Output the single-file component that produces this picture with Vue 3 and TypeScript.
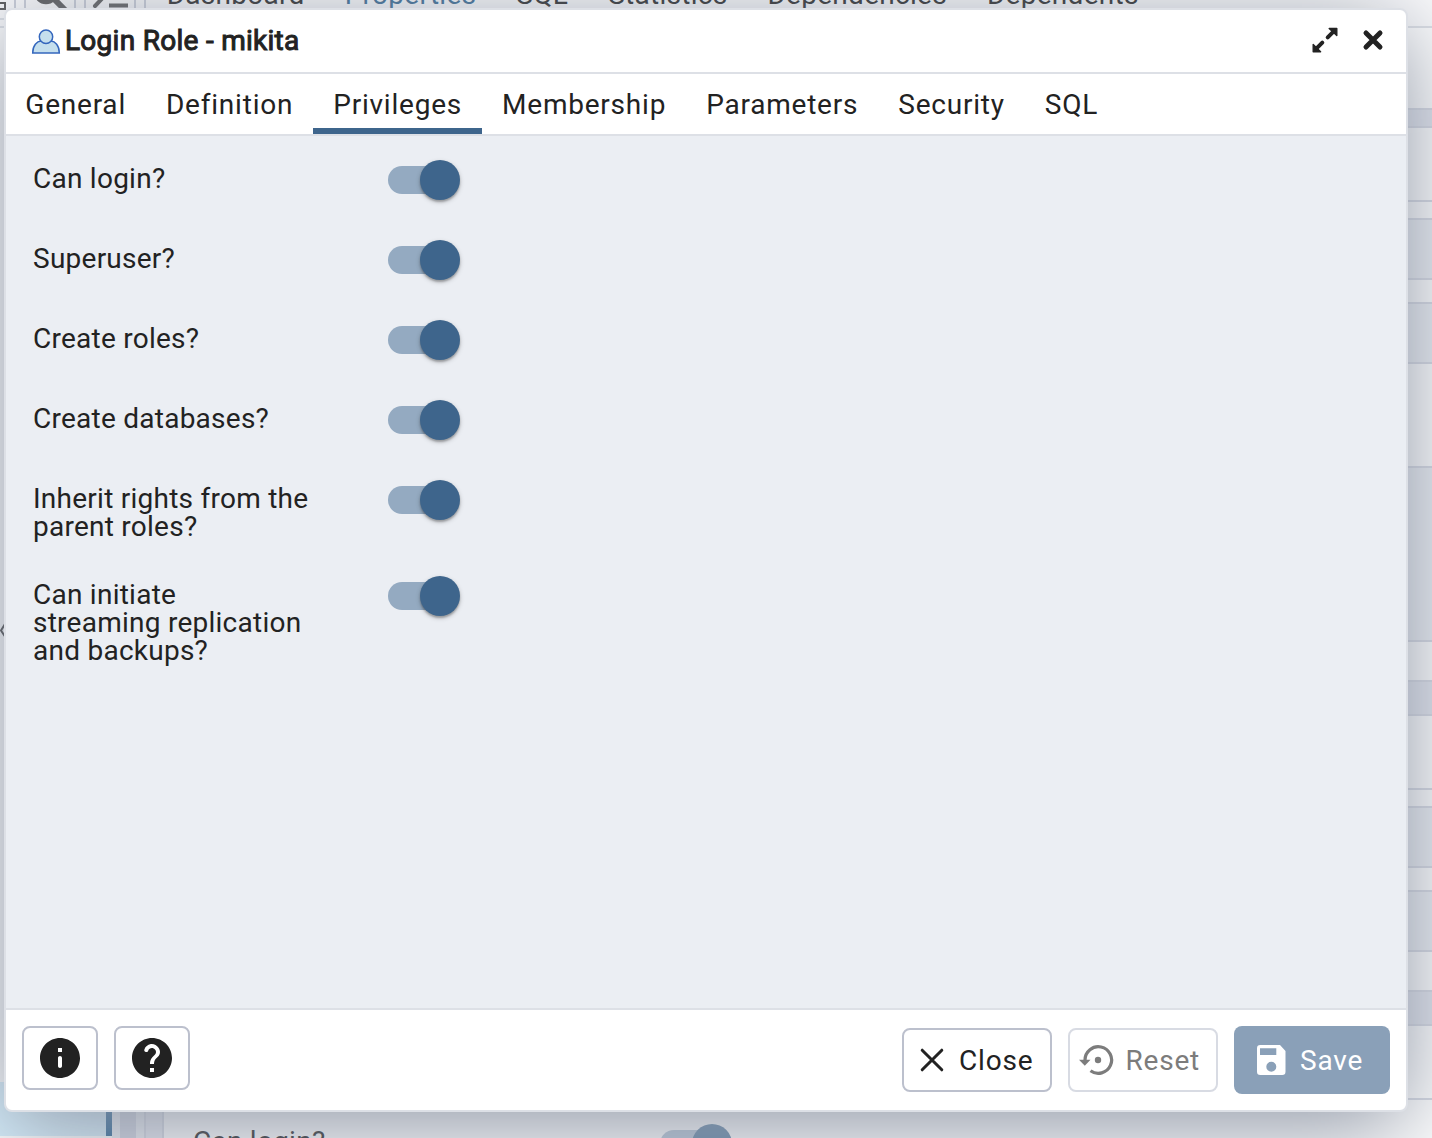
<script setup lang="ts">
import { ref } from 'vue'

interface Privilege {
  label: string
  enabled: boolean
}

interface Band {
  height: number
  tone: 'light' | 'tint' | 'head'
}

const tabs = ['General', 'Definition', 'Privileges', 'Membership', 'Parameters', 'Security', 'SQL']
const activeTab = ref('Privileges')

const privileges = ref<Privilege[]>([
  { label: 'Can login?', enabled: true },
  { label: 'Superuser?', enabled: true },
  { label: 'Create roles?', enabled: true },
  { label: 'Create databases?', enabled: true },
  { label: 'Inherit rights from the parent roles?', enabled: true },
  { label: 'Can initiate streaming replication and backups?', enabled: true },
])

const pageTabs = ['Dashboard', 'Properties', 'SQL', 'Statistics', 'Dependencies', 'Dependents']

// Heights include the 2px rule under every band.
const bands: Band[] = [
  { height: 82, tone: 'light' },
  { height: 18, tone: 'head' },
  { height: 74, tone: 'light' },
  { height: 18, tone: 'light' },
  { height: 60, tone: 'tint' },
  { height: 24, tone: 'light' },
  { height: 60, tone: 'tint' },
  { height: 104, tone: 'light' },
  { height: 174, tone: 'tint' },
  { height: 40, tone: 'light' },
  { height: 34, tone: 'head' },
  { height: 74, tone: 'light' },
  { height: 18, tone: 'light' },
  { height: 60, tone: 'tint' },
  { height: 24, tone: 'light' },
  { height: 60, tone: 'tint' },
  { height: 40, tone: 'light' },
  { height: 34, tone: 'head' },
  { height: 74, tone: 'light' },
]
</script>

<template>
  <div class="screen">
    <div class="page">
      <header class="page-bar">
        <div class="tools">
          <span class="tool tool-grid">
            <svg width="8" height="12" viewBox="0 0 8 12"><path d="M0 3h5v6H0" fill="none" stroke="#555" stroke-width="2" /></svg>
          </span>
          <span class="tool tool-search">
            <svg width="48" height="40" viewBox="0 0 48 40"><circle cx="20" cy="16" r="10" fill="none" stroke="#555" stroke-width="4.500" /><path d="M28 23l11 11" stroke="#555" stroke-width="6" /></svg>
          </span>
          <span class="tool tool-query">
            <svg width="48" height="40" viewBox="0 0 48 40"><path d="M9 9l10 10.500L9 30" fill="none" stroke="#555" stroke-width="4" stroke-linecap="round" /><path d="M23 29.500h19" stroke="#555" stroke-width="4" /></svg>
          </span>
        </div>
        <nav class="page-tabs">
          <span v-for="t in pageTabs" :key="t" :class="{ current: t === 'Properties' }">{{ t }}</span>
        </nav>
      </header>
      <div class="page-body">
        <div v-for="(b, i) in bands" :key="i" class="band" :class="b.tone" :style="{ height: b.height + 'px' }"></div>
      </div>
      <footer class="page-foot">
        <div class="tree-row"></div>
        <div class="tree-scroll"></div>
        <div class="splitter"></div>
        <div class="foot-form">
          <span class="foot-label">Can login?</span>
          <span class="switch muted"><i class="track"></i><i class="thumb"></i></span>
        </div>
      </footer>
      <svg class="collapse" width="8" height="20" viewBox="0 0 8 20"><path d="M5 4L1 10.500l4 6" fill="none" stroke="#333" stroke-width="2" /></svg>
    </div>

    <section class="dialog" role="dialog">
      <header class="dialog-head">
        <svg class="role-icon" width="30" height="26" viewBox="0 0 30 26">
          <path d="M1.700 23.900C1.700 16.500 6 12.300 10 12.100h10c4 .2 8.300 4.400 8.300 11.800z" fill="#c5dfed" stroke="#3567bd" stroke-width="1.500" />
          <circle cx="15" cy="7.800" r="6.700" fill="#c5dfed" stroke="#3567bd" stroke-width="1.500" />
        </svg>
        <h1>Login Role - mikita</h1>
        <button class="head-btn" aria-label="Maximize">
          <svg width="26" height="26" viewBox="0 0 26 26">
            <path d="M17.200 1.400h7.600v7.200z M1.200 17.400v7.400h7.400z" fill="#222" stroke="#222" stroke-width="1.400" stroke-linejoin="round" />
            <path d="M15.700 10.300l6-6M10.300 15.700l-6 6" stroke="#222" stroke-width="4" stroke-linecap="round" />
          </svg>
        </button>
        <button class="head-btn close" aria-label="Close dialog">
          <svg width="20" height="20" viewBox="0 0 20 20"><path d="M3 3l14 14M17 3L3 17" stroke="#222" stroke-width="5" stroke-linecap="round" /></svg>
        </button>
      </header>

      <nav class="tabs">
        <button v-for="t in tabs" :key="t" class="tab" :class="{ active: t === activeTab }" @click="activeTab = t">{{ t }}</button>
      </nav>

      <main class="dialog-body">
        <div v-for="p in privileges" :key="p.label" class="field">
          <label>{{ p.label }}</label>
          <span class="switch" :class="{ off: !p.enabled }" @click="p.enabled = !p.enabled"><i class="track"></i><i class="thumb"></i></span>
        </div>
      </main>

      <footer class="dialog-foot">
        <button class="btn icon" aria-label="Info">
          <svg width="48" height="48" viewBox="0 0 24 24"><path fill="#222" d="M12 2C6.480 2 2 6.480 2 12s4.480 10 10 10 10-4.480 10-10S17.520 2 12 2m0 15c-.55 0-1-.45-1-1v-4c0-.55.45-1 1-1s1 .45 1 1v4c0 .55-.45 1-1 1m1-8h-2V7h2z" /></svg>
        </button>
        <button class="btn icon" aria-label="Help">
          <svg width="48" height="48" viewBox="0 0 24 24"><path fill="#222" d="M12 2C6.480 2 2 6.480 2 12s4.480 10 10 10 10-4.480 10-10S17.520 2 12 2m1 17h-2v-2h2zm2.070-7.750-.9.920c-.5.510-.86.970-1.040 1.690-.08.320-.13.680-.13 1.140h-2v-.5c0-.46.080-.9.220-1.310.2-.58.530-1.100.950-1.520l1.240-1.260c.46-.44.680-1.100.550-1.800-.13-.72-.69-1.330-1.390-1.530-1.110-.31-2.140.320-2.470 1.270-.12.370-.43.650-.82.650h-.3C8.400 9 8 8.440 8.160 7.880c.43-1.470 1.680-2.590 3.230-2.830 1.520-.24 2.970.550 3.870 1.800 1.180 1.630.830 3.380-.19 4.400" /></svg>
        </button>
        <span class="grow"></span>
        <button class="btn close-btn">
          <svg width="24" height="24" viewBox="0 0 24 24"><path d="M2.200 2.200l19.600 19.600M21.800 2.200L2.200 21.800" stroke="#222" stroke-width="3" stroke-linecap="round" /></svg>
          <span>Close</span>
        </button>
        <button class="btn reset-btn" disabled>
          <svg width="34" height="32" viewBox="0 0 34 32">
            <path d="M5 16A13.300 13.300 0 1 1 10.500 26.800" fill="none" stroke="#7c7c7c" stroke-width="3.200" />
            <path d="M-1 15.800h11.500L4.800 21.800z" fill="#7c7c7c" />
            <circle cx="18" cy="16" r="3.200" fill="#7c7c7c" />
          </svg>
          <span>Reset</span>
        </button>
        <button class="btn save-btn" disabled>
          <svg width="30" height="30" viewBox="0 0 30 30"><path fill="#fff" fill-rule="evenodd" d="M3.300 0h19.700L28.500 6v20.700a3.300 3.300 0 0 1-3.300 3.300H3.300A3.300 3.300 0 0 1 0 26.700V3.300A3.300 3.300 0 0 1 3.300 0M3 3.300v6.700h16.300v-6.700zM14.300 16.700a5 5 0 1 0 0 10 5 5 0 0 0 0-10" /></svg>
          <span>Save</span>
        </button>
      </footer>
    </section>
  </div>
</template>

<style scoped>
* {
  box-sizing: border-box;
}
.screen {
  position: relative;
  width: 1432px;
  height: 1138px;
  overflow: hidden;
  font-family: Roboto, 'Liberation Sans', sans-serif;
  font-size: 28px;
  color: #222;
}
button {
  font: inherit;
  color: inherit;
  background: none;
  border: 0;
  padding: 0;
  margin: 0;
}
svg {
  display: block;
  flex: none;
  overflow: visible;
}

/* page behind the dialog */
.page {
  position: relative;
  height: 1138px;
  display: flex;
  flex-direction: column;
  background: #fff;
}
.page-bar {
  height: 28px;
  flex: none;
  display: flex;
  background: #fcfcfd;
  border-bottom: 2px solid #dde0e6;
}
.tools {
  width: 146px;
  display: flex;
  height: 20px;
  overflow: hidden;
  border-bottom: 2px solid #dde0e6;
}
.tool {
  border-right: 2px solid #c9cdd8;
  flex: none;
}
.tool-grid {
  width: 16px;
}
.tool-search {
  width: 52px;
  margin-left: 8px;
  border-left: 2px solid #c9cdd8;
}
.tool-search svg {
  margin-top: -24px;
}
.tool-query {
  width: 52px;
  margin-left: 8px;
  border-left: 2px solid #c9cdd8;
}
.tool-query svg {
  margin-top: -24px;
}
.page-tabs {
  border-left: 2px solid #c9cdd8;
  margin-left: -2px;
  display: flex;
  gap: 40px;
  padding-left: 20.700px;
  line-height: 32px;
  letter-spacing: 0.28px;
  margin-top: -21px;
}
.current {
  color: #326690;
}
.page-body {
  flex: none;
  padding-left: 16px;
}
.band {
  border-bottom: 2px solid #d5d8e2;
}
.band.tint {
  background: #ebeef3;
}
.band.head {
  background: #e1e4ed;
}
.page-foot {
  flex: 1;
  display: flex;
  margin-top: -18px;
  overflow: hidden;
}
.tree-row {
  width: 112px;
  height: 54px;
  background: #d6effc;
  border-right: 6px solid #2c6594;
}
.tree-scroll {
  width: 32px;
  background: linear-gradient(90deg, #ebeef3 8px, #d0d4e0 8px, #d0d4e0 24px, #ebeef3 24px);
}
.splitter {
  width: 20px;
  background: #e6e8f0;
  border: solid #d5d8e2;
  border-width: 0 2px;
}
.foot-form {
  flex: 1;
  display: flex;
  margin-top: 18px;
  padding: 24px 0 0 29px;
}
.foot-label {
  width: 467px;
  margin-top: 1px;
  line-height: 34px;
  letter-spacing: 0.25px;
}
.collapse {
  position: absolute;
  left: 0;
  top: 620px;
}

/* dialog */
.dialog {
  position: absolute;
  left: 4px;
  top: 8px;
  width: 1404px;
  height: 1104px;
  display: flex;
  flex-direction: column;
  background: #fff;
  border: 2px solid #dde0e6;
  border-radius: 8px;
  box-shadow: 0 16px 96px #8b93a2;
  overflow: hidden;
}
.dialog-head {
  height: 64px;
  flex: none;
  display: flex;
  align-items: center;
  padding: 0 23px 2px 25px;
  border-bottom: 2px solid #dde0e6;
}
.role-icon {
  margin-top: 4px;
}
h1 {
  flex: 1;
  margin: 2px 0 0 4px;
  font-size: 28px;
  font-weight: 400;
  line-height: 32px;
  letter-spacing: 0.28px;
  -webkit-text-stroke: 1px #222;
}
.head-btn.close {
  margin-left: 25px;
}
.tabs {
  height: 62px;
  flex: none;
  display: flex;
  border-bottom: 2px solid #dde0e6;
}
.tab {
  height: 60px;
  padding: 2px 20px 0;
  line-height: 32px;
  letter-spacing: 0.78px;
  border-bottom: 6px solid transparent;
  border-top: 6px solid transparent;
}
.tab:first-child {
  padding-left: 19.300px;
}
.tab.active {
  border-bottom-color: #3e658c;
}
.dialog-body {
  flex: 1;
  background: #ebeef3;
  padding: 24px 0 0 26px;
}
.field {
  display: flex;
  min-height: 80px;
  align-items: flex-start;
}
.field:nth-child(5) {
  height: 96px;
}
.field label {
  width: 278px;
  margin: 5px 77px 0 1px;
  line-height: 28px;
  letter-spacing: 0.25px;
}
.switch {
  position: relative;
  width: 72px;
  height: 40px;
  flex: none;
  display: flex;
  align-items: center;
}
.track {
  width: 66px;
  height: 28px;
  border-radius: 14px;
  background: #94aac1;
}
.thumb {
  position: absolute;
  right: 0;
  top: 0;
  width: 40px;
  height: 40px;
  border-radius: 50%;
  background: #3e658c;
  box-shadow: 0 2px 2px rgba(0, 0, 0, 0.24), 0 2px 5px rgba(0, 0, 0, 0.2);
}
.switch.off .thumb {
  right: 32px;
}
.muted .track {
  background: #b5c5d6;
}
.muted .thumb {
  background: #6387a6;
  box-shadow: none;
}
.dialog-foot {
  height: 102px;
  flex: none;
  display: flex;
  align-items: center;
  gap: 16px;
  padding: 0 16px;
  border-top: 2px solid #dde0e6;
}
.btn {
  height: 64px;
  display: flex;
  align-items: center;
  border: 2px solid #bcc0cd;
  border-radius: 8px;
  letter-spacing: 0.8px;
  line-height: 32px;
}
.btn span {
  margin-top: 2px;
}
.btn.icon {
  width: 76px;
  justify-content: center;
  margin-top: -4px;
}
.grow {
  flex: 1;
}
.close-btn {
  width: 150px;
  padding-left: 16px;
  gap: 15px;
}
.reset-btn {
  width: 150px;
  padding-left: 10px;
  gap: 11.500px;
  color: #7c7c7c;
  border-color: #d8dbe3;
}
.save-btn {
  width: 156px;
  height: 68px;
  padding-left: 23px;
  gap: 13px;
  color: #fff;
  border: 0;
  background: #8aa0b8;
}
</style>

<style>
body {
  overflow: hidden;
}
</style>
